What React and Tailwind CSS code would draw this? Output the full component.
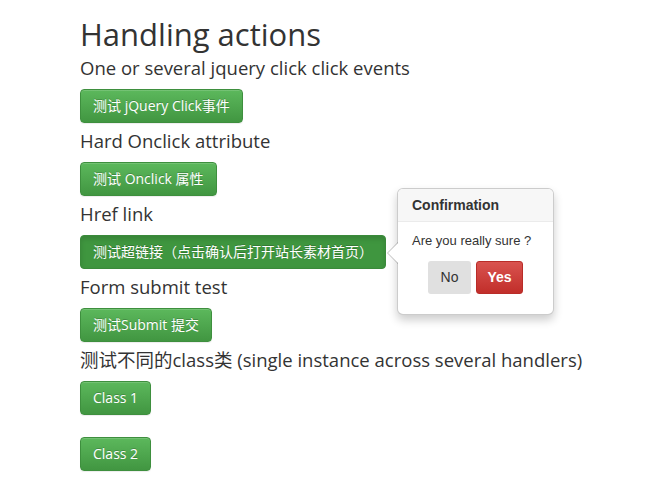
const font = "font-['Open_Sans','Noto_Sans_CJK_SC',sans-serif]";

function GreenButton({ children, active }) {
    return (
        <button
            className={
                "block h-[34px] px-[12px] rounded-[4px] border text-[14px] leading-[20px] text-white [text-shadow:0_-1px_0_rgba(0,0,0,0.2)] " +
                (active
                    ? "bg-[#3f963f] border-[#3a8a3a] shadow-[inset_0_3px_5px_rgba(0,0,0,0.125)]"
                    : "bg-[linear-gradient(to_bottom,#5cb85c,#419641)] border-[#3e8f3e] shadow-[inset_0_1px_0_rgba(255,255,255,0.15),0_1px_1px_rgba(0,0,0,0.075)]")
            }
        >
            {children}
        </button>
    );
}

function Heading({ children }) {
    return (
        <div className="h-[20px] leading-[20px] text-[18.5px] mt-[8px] mb-[11px] whitespace-nowrap">
            {children}
        </div>
    );
}

function Popover() {
    return (
        <div className="absolute left-[397px] top-[188px] w-[157px] h-[127px] bg-white border border-black/20 rounded-[6px] shadow-[0_5px_10px_rgba(0,0,0,0.2)] font-['Liberation_Sans',Arial,sans-serif] text-[#333]">
            {/* arrow */}
            <div className="absolute -left-[11px] top-[53px] w-0 h-0 border-y-[11px] border-y-transparent border-r-[11px] border-r-black/25" />
            <div className="absolute -left-[10px] top-[54px] w-0 h-0 border-y-[10px] border-y-transparent border-r-[10px] border-r-white" />
            <div className="h-[33px] px-[14px] bg-[#f7f7f7] border-b border-[#ebebeb] rounded-t-[5px] text-[14px] font-bold leading-[33px]">
                Confirmation
            </div>
            <div className="px-[14px] pt-[9px] text-[13px] leading-[20px]">
                Are you really sure ?
            </div>
            <div className="flex justify-center gap-[5px] mt-[10px]">
                <button className="h-[33px] w-[43px] rounded-[3px] bg-[#e0e0e0] text-[14px] text-[#333]">
                    No
                </button>
                <button className="h-[33px] w-[47px] rounded-[3px] bg-[linear-gradient(to_bottom,#d9534f,#c12e2a)] border border-[#b92c28] text-[14px] font-bold text-white">
                    Yes
                </button>
            </div>
        </div>
    );
}

export default function App() {
    return (
        <div className={"relative min-h-[496px] bg-white text-[#333] px-[80px] " + font}>
            <h1 className="pt-[16px] text-[31px] leading-[36px] h-[52px]">Handling actions</h1>
            <div className="h-[20px] leading-[20px] text-[18.5px] mb-[11px] mt-[6px]">
                One or several jquery click click events
            </div>
            <GreenButton>测试 jQuery Click事件</GreenButton>
            <Heading>Hard Onclick attribute</Heading>
            <GreenButton>测试 Onclick 属性</GreenButton>
            <Heading>Href link</Heading>
            <GreenButton active>测试超链接（点击确认后打开站长素材首页）</GreenButton>
            <Heading>Form submit test</Heading>
            <GreenButton>测试Submit 提交</GreenButton>
            <Heading>测试不同的class类 (single instance across several handlers)</Heading>
            <GreenButton>Class 1</GreenButton>
            <div className="h-[22px]" />
            <GreenButton>Class 2</GreenButton>
            <Popover />
        </div>
    );
}
